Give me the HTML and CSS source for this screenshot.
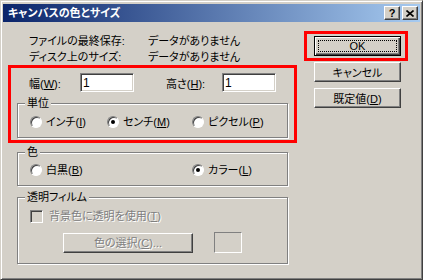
FILE: index.html
```html
<!DOCTYPE html>
<html lang="ja">
<head>
    <meta charset="UTF-8">
    <title>キャンバスの色とサイズ</title>
    <link rel="stylesheet" href="styles.css">
</head>
<body>
    <div class="window">
        <div class="titlebar">
            <span class="title">キャンバスの色とサイズ</span>
            <div class="caption-buttons">
                <span class="cap-btn">?</span>
                <span class="cap-btn">
                    <svg width="8" height="7" viewBox="0 0 8 7"><path d="M0.5 0.5 L7.5 6.5 M7.5 0.5 L0.5 6.5" stroke="#000" stroke-width="1.6"/></svg>
                </span>
            </div>
        </div>
        <div class="dialog">
            <div class="main">
                <!-- file info -->
                <div class="info">
                    <span>ファイルの最終保存:</span><span>データがありません</span>
                    <span>ディスク上のサイズ:</span><span>データがありません</span>
                </div>

                <!-- size and units (marked) -->
                <div class="mark size-box">
                    <div class="size-row">
                        <label class="lbl-w">幅(<u>W</u>):</label>
                        <input type="text" class="num" value="1">
                        <label class="lbl-h">高さ(<u>H</u>):</label>
                        <input type="text" class="num" value="1">
                    </div>
                    <fieldset class="group">
                        <legend>単位</legend>
                        <div class="options">
                            <label class="opt unit-1"><span class="radio"></span><span>インチ(<u>I</u>)</span></label>
                            <label class="opt unit-2"><span class="radio checked"></span><span>センチ(<u>M</u>)</span></label>
                            <label class="opt"><span class="radio"></span><span>ピクセル(<u>P</u>)</span></label>
                        </div>
                    </fieldset>
                </div>

                <fieldset class="group color-group">
                    <legend>色</legend>
                    <div class="options">
                        <label class="opt color-1"><span class="radio"></span><span>白黒(<u>B</u>)</span></label>
                        <label class="opt"><span class="radio checked"></span><span>カラー(<u>L</u>)</span></label>
                    </div>
                </fieldset>

                <fieldset class="group film-group">
                    <legend>透明フィルム</legend>
                    <div class="options film">
                        <label class="opt disabled"><span class="check"></span><span>背景色に透明を使用(<u>T</u>)</span></label>
                        <div class="pick-row">
                            <button class="btn pick disabled">色の選択(<u>C</u>)...</button>
                            <span class="swatch"></span>
                        </div>
                    </div>
                </fieldset>
            </div>

            <div class="buttons">
                <div class="mark ok-box">
                    <button class="btn default"><span class="focus">OK</span></button>
                </div>
                <button class="btn side cancel">キャンセル</button>
                <button class="btn side reset">既定値(<u>D</u>)</button>
            </div>
        </div>
    </div>
</body>
</html>
```

FILE: styles.css
```css
/* Windows 2000 style dialog */
body {
    margin: 0;
    padding: 0;
    background: #fff;
    font-family: "Liberation Sans", "Noto Sans CJK JP", sans-serif;
    font-size: 11px;
    font-feature-settings: "palt";
    text-autospace: no-autospace;
    color: #000;
}
u {
    text-decoration: underline;
    text-underline-offset: 1px;
}
.window {
    width: 423px;
    height: 280px;
    box-sizing: border-box;
    background: #d4d0c8;
    border: 1px solid;
    border-color: #d4d0c8 #404040 #404040 #d4d0c8;
    box-shadow: inset 1px 1px 0 #fff, inset -1px -1px 0 #808080;
    padding: 3px 2px 2px 2px;
}
.titlebar {
    height: 18px;
    display: flex;
    align-items: center;
    justify-content: space-between;
    background: linear-gradient(to right, #0a246a, #a6caf0);
    color: #fff;
    padding: 0 2px 0 5px;
}
.title {
    font-weight: bold;
    line-height: 18px;
}
.caption-buttons {
    display: flex;
    gap: 2px;
}
.cap-btn {
    width: 16px;
    height: 14px;
    box-sizing: border-box;
    display: flex;
    align-items: center;
    justify-content: center;
    background: #d4d0c8;
    color: #000;
    font-weight: bold;
    font-size: 11px;
    border: 1px solid;
    border-color: #fff #404040 #404040 #fff;
    box-shadow: inset -1px -1px 0 #808080;
}
.dialog {
    display: flex;
    gap: 7px;
    padding: 9px 0 0 5px;
}
.main {
    width: 289px;
}
.info {
    display: grid;
    grid-template-columns: 119px auto;
    padding-left: 21px;
    margin-top: 2px;
    line-height: 16px;
}
.mark {
    border: 3px solid #f00;
}
.size-box {
    padding: 5px 6px 2px 6px;
}
.size-row {
    display: flex;
    align-items: center;
    padding-left: 12px;
    height: 19px;
}
.lbl-w {
    width: 51px;
}
.lbl-h {
    width: 56px;
    margin-left: 32px;
}
.num {
    width: 54px;
    height: 19px;
    box-sizing: border-box;
    margin: 0;
    padding: 0 2px;
    font: inherit;
    font-size: 12px;
    border: 1px solid;
    border-color: #808080 #fff #fff #808080;
    box-shadow: inset 1px 1px 0 #404040, inset -1px -1px 0 #d4d0c8;
    background: #fff;
    outline: none;
}
.group {
    margin: 4px 0 0 0;
    padding: 0;
    min-width: 0;
    border: 1px solid #808080;
    box-shadow: inset 1px 1px 0 #fff, 1px 1px 0 #fff;
}
.group legend {
    margin-left: 7px;
    padding: 0 2px;
    line-height: 14px;
    background: #d4d0c8;
}
.color-group {
    margin: 2px 0 0 9px;
    width: 271px;
    box-sizing: border-box;
}
.film-group {
    margin: 4px 0 0 9px;
    width: 271px;
    box-sizing: border-box;
}
.options {
    display: flex;
    padding: 5px 0 8px 12px;
    line-height: 14px;
}
.color-group .options {
    padding-top: 4px;
}
.opt {
    display: flex;
    align-items: center;
    gap: 4px;
}
.unit-1 {
    width: 77px;
}
.unit-2 {
    width: 85px;
}
.color-1 {
    width: 162px;
}
.radio {
    width: 12px;
    height: 12px;
    box-sizing: border-box;
    border-radius: 50%;
    background: #fff;
    border: 1px solid;
    border-color: #808080 #fff #fff #808080;
    box-shadow: inset 1px 1px 0 #404040;
    display: flex;
    align-items: center;
    justify-content: center;
}
.radio.checked::after {
    content: "";
    width: 4px;
    height: 4px;
    border-radius: 50%;
    background: #000;
}
.film {
    flex-direction: column;
    align-items: flex-start;
    padding-bottom: 10px;
}
.check {
    width: 13px;
    height: 13px;
    box-sizing: border-box;
    background: #d4d0c8;
    border: 1px solid;
    border-color: #808080 #fff #fff #808080;
    box-shadow: inset 1px 1px 0 #404040;
    margin-right: 2px;
}
.disabled {
    color: #808080;
    text-shadow: 1px 1px 0 #fff;
}
.pick-row {
    display: flex;
    align-items: center;
    margin-top: 9px;
    margin-left: 33px;
}
.btn {
    font: inherit;
    color: #000;
    background: #d4d0c8;
    margin: 0;
    padding: 0;
    box-sizing: border-box;
    height: 20px;
    border: 1px solid;
    border-color: #fff #404040 #404040 #fff;
    box-shadow: inset -1px -1px 0 #808080;
}
.pick {
    width: 130px;
    color: #808080;
}
.swatch {
    width: 28px;
    height: 21px;
    box-sizing: border-box;
    margin-left: 21px;
    border: 1px solid;
    border-color: #808080 #fff #fff #808080;
}
.buttons {
    width: 104px;
    display: flex;
    flex-direction: column;
}
.ok-box {
    padding: 2px 4px 2px 7px;
}
.btn.default {
    width: 87px;
    display: flex;
    padding: 3px;
    border: 1px solid #000;
    box-shadow: inset 1px 1px 0 #fff, inset -1px -1px 0 #404040, inset -2px -2px 0 #808080;
}
.focus {
    flex: 1;
    border: 1px dotted #000;
    line-height: 10px;
}
.side {
    width: 87px;
    margin-left: 10px;
}
.cancel {
    margin-top: 1px;
}
.reset {
    margin-top: 6px;
}
```
